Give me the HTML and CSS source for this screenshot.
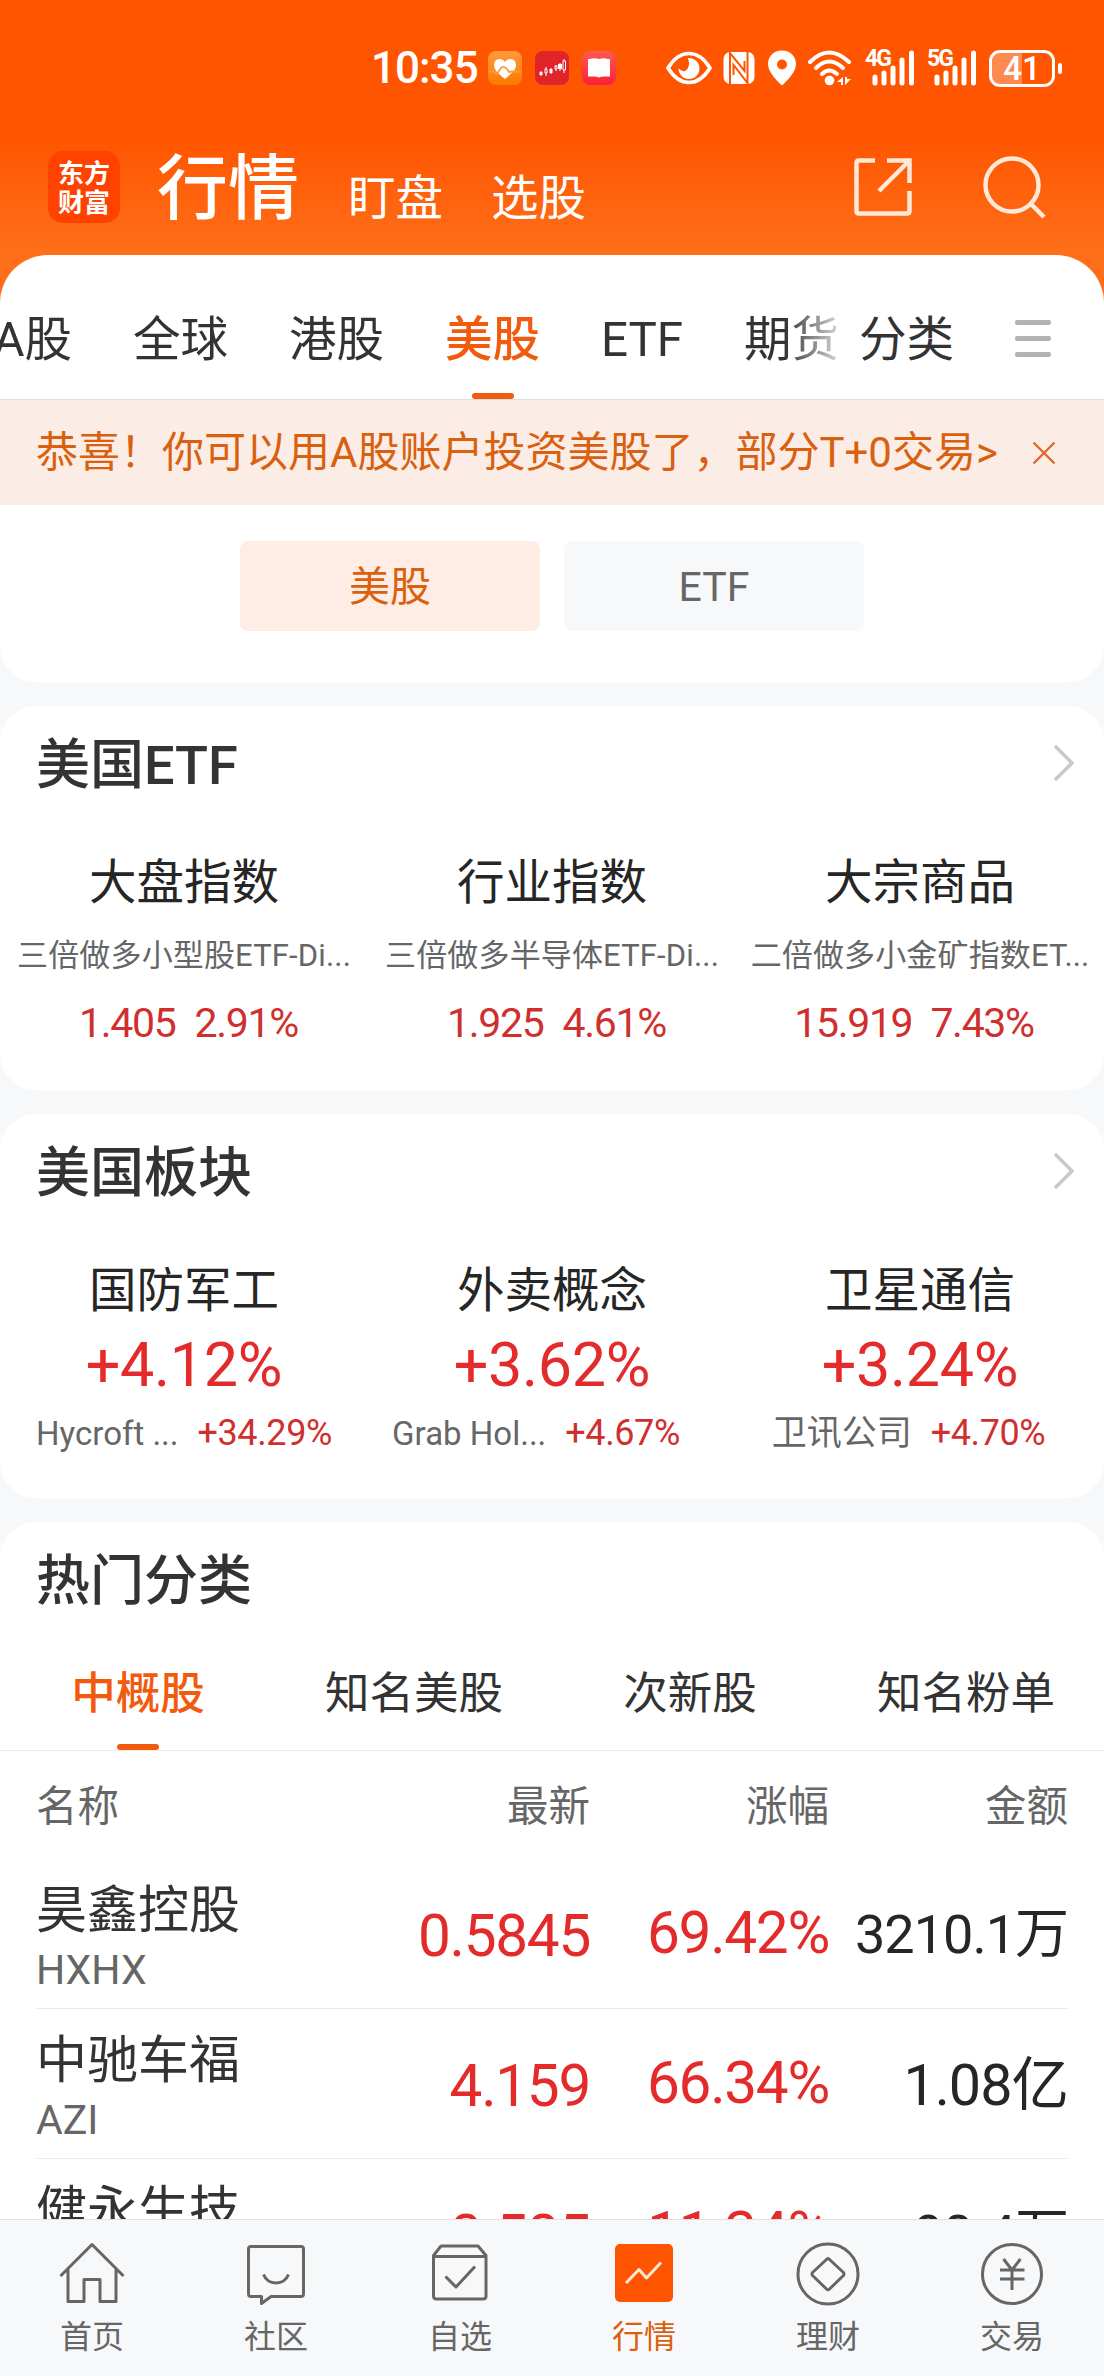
FILE: index.html
```html
<!DOCTYPE html>
<html lang="zh-CN">
<head>
    <meta charset="UTF-8">
    <meta name="viewport" content="width=device-width, initial-scale=1.0">
    <title>行情</title>

    <link rel="stylesheet" href="styles.css">
</head>
<body>
    <div class="app">
        <div class="header">
            <div class="status-bar">
                <span class="clock">10:35</span>
                <svg class="app-icon" viewBox="0 0 34 34">
                    <defs>
                        <linearGradient id="health" x1="0" y1="0" x2="0" y2="1"><stop offset="0" stop-color="#ff9a3c"/><stop offset="1" stop-color="#fb7a00"/></linearGradient>
                        <linearGradient id="book" x1="0" y1="0" x2="0" y2="1"><stop offset="0" stop-color="#ff5a50"/><stop offset="1" stop-color="#fb2038"/></linearGradient>
                    </defs>
                    <rect width="34" height="34" rx="8" fill="url(#health)"/>
                    <path d="M17 28 C10 22 6 19 6 14 C6 7 14 6 17 11 C20 6 28 7 28 14 C28 19 24 22 17 28Z" fill="#fff"/>
                    <path d="M0 20.500 H6 L9 23.500 Q13 15 16 16 T21 21 L24 20.500 H34" fill="none" stroke="#ff9a3c" stroke-width="1.800"/>
                </svg>
                <svg class="app-icon" viewBox="0 0 34 34">
                    <rect width="34" height="34" rx="8" fill="#e0242a"/>
                    <path d="M6 20v5M11 16v9M16 17v6M21 14v6M25 12v8M29 8v14" stroke="#fff" stroke-width="1"/>
                    <path d="M4.500 21h3v3h-3zM14.500 18h3v4h-3zM23 13h4v5h-4z" fill="#fff"/>
                    <path d="M10 18h2v4h-2zM20 15h2v3h-2zM28 10h2.500v9H28z" fill="#e0242a" stroke="#fff"/>
                </svg>
                <svg class="app-icon" viewBox="0 0 34 34">
                    <rect width="34" height="34" rx="8" fill="url(#book)"/>
                    <path d="M6 8H8Q12 6.500 17 8Q22 6.500 26 8H28V25.500H24Q20 25 17 26.500Q14 25 10 25.500H6Z" fill="#fff"/>
                </svg>
                <div class="status-right">
                    <svg width="46" height="34" viewBox="0 0 46 34">
                        <path d="M2 17 Q11 2.500 23 2.500 T44 17 Q35 31.500 23 31.500 T2 17Z" fill="none" stroke="#fff" stroke-width="3.600"/>
                        <path d="M22 7 A10.500 10.500 0 1 1 12.500 17 Q15 21 19 20 Q25 17 22 7Z" fill="#fff"/>
                    </svg>
                    <svg class="nfc" width="32" height="34" viewBox="0 0 32 34">
                        <rect x="0.500" y="1" width="31" height="32" rx="7" fill="#fff"/>
                        <path d="M7 33V2L21.500 20V10M24.500 1V32L10.500 14V24" fill="none" stroke="#ff5500" stroke-width="2"/>
                    </svg>
                    <svg class="pin" width="30" height="36" viewBox="0 0 30 36">
                        <path d="M15 0.500 C6.500 .500 1 6.500 1 14 C1 21 8 29 15 35.500 C22 29 29 21 29 14 C29 6.500 23.500 .500 15 .500Z M15 9.500a5 5 0 1 1 0 10a5 5 0 1 1 0-10Z" fill="#fff" fill-rule="evenodd"/>
                    </svg>
                    <svg class="wifi" width="46" height="36" viewBox="0 0 46 36">
                        <g fill="none" stroke="#fff" stroke-width="4" stroke-linecap="round">
                            <path d="M3 12 Q22 -7 42 12"/>
                            <path d="M9 18 Q22 5 36 18"/>
                            <path d="M15 24 Q22 17 30 24"/>
                        </g>
                        <circle cx="22.500" cy="30.500" r="4.800" fill="#fff"/>
                        <path d="M30 32l6-5v8h-2v-3zM38 27v8l6-6h-4v-2z" fill="#fff"/>
                    </svg>
                    <div class="signal">
                        <span>4G</span>
                        <svg width="50" height="36" viewBox="0 0 50 36"><path d="M10 27v6M19 23v10M28 18v15M37 10v23M46.500 3v30" stroke="#fff" stroke-width="5" stroke-linecap="round"/></svg>
                    </div>
                    <div class="signal">
                        <span>5G</span>
                        <svg width="50" height="36" viewBox="0 0 50 36"><path d="M10 27v6M19 23v10M28 18v15M37 10v23M46.500 3v30" stroke="#fff" stroke-width="5" stroke-linecap="round"/></svg>
                    </div>
                    <div class="battery">41</div>
                </div>
            </div>

            <div class="top-nav">
                <div class="logo">东方<br>财富</div>
                <span class="nav-main">行情</span>
                <span class="nav-sub">盯盘</span>
                <span class="nav-sub">选股</span>
                <div class="top-icons">
                    <svg width="60" height="60" viewBox="0 0 60 60" fill="none" stroke="#ffe8d6" stroke-width="4.500">
                        <path d="M22 3.500H6Q3.500 3.500 3.500 6V54Q3.500 56.500 6 56.500H54Q56.500 56.500 56.500 54V34"/>
                        <path d="M34 3.500H56.500V26M56 4L26 34"/>
                    </svg>
                    <svg class="search" width="66" height="66" viewBox="0 0 66 66" fill="none" stroke="#ffe8d6" stroke-width="4.500">
                        <circle cx="31" cy="31" r="26.500"/>
                        <path d="M50 50L63 63"/>
                    </svg>
                </div>
            </div>
        </div>

        <div class="sheet">
            <div class="market-tabs">
                <div class="tab-list">
                    <span>A股</span>
                    <span>全球</span>
                    <span>港股</span>
                    <span class="active">美股</span>
                    <span class="etf">ETF</span>
                    <span>期货</span>
                </div>
                <span class="category">分类</span>
                <div class="menu"><i></i><i></i><i></i></div>
            </div>
            <div class="notice">
                <span>恭喜！你可以用A股账户投资美股了，部分T+0交易&gt;</span>
                <svg width="24" height="24" viewBox="0 0 24 24"><path d="M1.500 1.500L22.500 22.500M22.500 1.500L1.500 22.500" stroke="#dd6a2c" stroke-width="2.400"/></svg>
            </div>
            <div class="switch">
                <span class="selected">美股</span>
                <span>ETF</span>
            </div>
        </div>

        <div class="card">
            <div class="card-title">
                <h2>美国ETF</h2>
                <svg width="24" height="38" viewBox="0 0 24 38"><path d="M3 2L20 19L3 36" fill="none" stroke="#c9c9c9" stroke-width="3.500"/></svg>
            </div>
            <div class="three-cols">
                <div class="col">
                    <div class="name">大盘指数</div>
                    <div class="fund">三倍做多小型股ETF-Di...</div>
                    <div class="quote"><span>1.405</span><span>2.91%</span></div>
                </div>
                <div class="col">
                    <div class="name">行业指数</div>
                    <div class="fund">三倍做多半导体ETF-Di...</div>
                    <div class="quote"><span>1.925</span><span>4.61%</span></div>
                </div>
                <div class="col">
                    <div class="name">大宗商品</div>
                    <div class="fund">二倍做多小金矿指数ET...</div>
                    <div class="quote wide"><span>15.919</span><span>7.43%</span></div>
                </div>
            </div>
        </div>

        <div class="card">
            <div class="card-title">
                <h2>美国板块</h2>
                <svg width="24" height="38" viewBox="0 0 24 38"><path d="M3 2L20 19L3 36" fill="none" stroke="#c9c9c9" stroke-width="3.500"/></svg>
            </div>
            <div class="three-cols">
                <div class="col">
                    <div class="name">国防军工</div>
                    <div class="change">+4.12%</div>
                    <div class="leader first"><span class="stock">Hycroft ...</span><span>+34.29%</span></div>
                </div>
                <div class="col">
                    <div class="name">外卖概念</div>
                    <div class="change">+3.62%</div>
                    <div class="leader second"><span class="stock">Grab Hol...</span><span>+4.67%</span></div>
                </div>
                <div class="col">
                    <div class="name">卫星通信</div>
                    <div class="change">+3.24%</div>
                    <div class="leader third"><span class="stock cn">卫讯公司</span><span>+4.70%</span></div>
                </div>
            </div>
        </div>

        <div class="card hot">
            <div class="card-title">
                <h2>热门分类</h2>
            </div>
            <div class="hot-tabs">
                <span class="active">中概股</span>
                <span>知名美股</span>
                <span>次新股</span>
                <span>知名粉单</span>
            </div>
            <div class="row row-head">
                <span>名称</span>
                <span>最新</span>
                <span>涨幅</span>
                <span>金额</span>
            </div>
            <div class="row">
                <div class="company">昊鑫控股<small>HXHX</small></div>
                <span class="price">0.5845</span>
                <span class="rate">69.42%</span>
                <span class="amount long">3210.1万</span>
            </div>
            <div class="row">
                <div class="company">中驰车福<small>AZI</small></div>
                <span class="price">4.159</span>
                <span class="rate">66.34%</span>
                <span class="amount">1.08亿</span>
            </div>
            <div class="row">
                <div class="company">健永生技</div>
                <span class="price">0.585</span>
                <span class="rate">11.34%</span>
                <span class="amount long">90.4万</span>
            </div>
        </div>

        <div class="tab-bar">
            <div class="tab-item">
                <svg width="66" height="66" viewBox="0 0 66 66">
                    <path d="M1.500 35L33 3.500L64.500 35M9 28V60.500H25V38.500H41V60.500H57V28"/>
                </svg>
                <span>首页</span>
            </div>
            <div class="tab-item">
                <svg width="66" height="66" viewBox="0 0 66 66">
                    <path d="M8 5.500H58Q60.500 5.500 60.500 8V53Q60.500 55.500 58 55.500H28L18.500 62.500V55.500H8Q5.500 55.500 5.500 53V8Q5.500 5.500 8 5.500Z"/>
                    <path d="M20.500 33.500Q24 42 33 42T45.500 33.500"/>
                </svg>
                <span>社区</span>
            </div>
            <div class="tab-item">
                <svg width="66" height="66" viewBox="0 0 66 66">
                    <path d="M6.500 14.500L14 5H51L59 14.500V55Q59 58 56 58H9.500Q6.500 58 6.500 55ZM6.500 15.500H59M18.500 35.500L29 46L48 25.500"/>
                </svg>
                <span>自选</span>
            </div>
            <div class="tab-item current">
                <svg width="66" height="66" viewBox="0 0 66 66">
                    <rect x="4" y="3" width="58" height="58" rx="5"/>
                    <path d="M15 42L28 28.500L35.500 37L50 21.500"/>
                </svg>
                <span>行情</span>
            </div>
            <div class="tab-item">
                <svg width="66" height="66" viewBox="0 0 66 66">
                    <circle cx="33" cy="33" r="30"/>
                    <path d="M31.500 18.500Q33 16.500 34.500 18.500L48.500 31.500Q49.500 33 48.500 34.500L34.500 48Q33 49.500 31.500 48L17.500 34.500Q16.500 33 17.500 31.500Z"/>
                </svg>
                <span>理财</span>
            </div>
            <div class="tab-item">
                <svg width="66" height="66" viewBox="0 0 66 66">
                    <circle cx="33" cy="33" r="29.500"/>
                    <path d="M24.500 18L33 29L41.500 18M33 29V49M21 29H45.500M21 38H45.500"/>
                </svg>
                <span>交易</span>
            </div>
        </div>
    </div>
</body>
</html>
```

FILE: styles.css
```css
*{
    box-sizing: border-box;
}

body{
    margin: 0;
    background-color: #f7f8fa;
    color: #333;
    font-family: Roboto, "Noto Sans CJK SC", sans-serif;
}

svg{
    display: block;
    flex: none;
}

.app{
    width: 1104px;
    height: 2376px;
    display: flex;
    flex-direction: column;
    overflow: hidden;
    background: linear-gradient(#ff5500 135px, #ff6f1a 255px, #ff6f1a 310px, #f7f8fa 310px);
}

.header{
    flex: none;
    height: 255px;
    color: white;
}

/* status bar */
.status-bar{
    height: 136px;
    padding: 0 42px 0 371px;
    display: flex;
    align-items: center;
}

.clock{
    width: 117px;
    font-size: 44px;
    line-height: 50px;
    letter-spacing: -1px;
    font-weight: 500;
}

.app-icon{
    width: 34px;
    height: 34px;
    margin-right: 13px;
}

.status-right{
    flex: 1;
    display: flex;
    align-items: center;
    justify-content: flex-end;
}

.nfc{
    margin-left: 11px;
}

.pin{
    margin-left: 12px;
}

.wifi{
    margin-left: 10px;
}

.signal{
    position: relative;
    margin-left: 12px;
}

.signal span{
    position: absolute;
    left: 0;
    top: -3px;
    font-size: 23px;
    line-height: 24px;
    letter-spacing: -2px;
    font-weight: 700;
}

.battery{
    position: relative;
    width: 66px;
    height: 37px;
    margin-left: 12px;
    margin-right: 7px;
    border: 3px solid #fff;
    border-radius: 11px;
    background: linear-gradient(90deg, #ff8a50 50%, transparent 50%);
    font-size: 33px;
    font-weight: 500;
    line-height: 32px;
    text-align: center;
}

.battery::after{
    content: "";
    position: absolute;
    right: -10px;
    top: 10px;
    width: 4px;
    height: 11px;
    border-radius: 2px;
    background-color: #fff;
}

/* top navigation */
.top-nav{
    height: 119px;
    padding: 0 57px 17px 48px;
    display: flex;
    align-items: center;
}

.logo{
    width: 72px;
    height: 72px;
    border-radius: 15px;
    background-color: #ff4200;
    font-family: "Noto Sans CJK SC", sans-serif;
    font-size: 26px;
    font-weight: 700;
    line-height: 29px;
    padding-top: 6px;
    text-align: center;
}

.nav-main{
    margin: 3px 0 0 37px;
    font-size: 71px;
    line-height: 80px;
    font-weight: 500;
}

.nav-sub{
    margin: 24px 0 0 49px;
    font-size: 47.500px;
    line-height: 60px;
}

.nav-sub + .nav-sub{
    margin-left: 48px;
}

.top-icons{
    flex: 1;
    display: flex;
    align-items: center;
    justify-content: flex-end;
}

.search{
    margin-left: 68px;
}

/* white sheet with market tabs */
.sheet{
    flex: none;
    height: 427px;
    background-color: white;
    border-radius: 48px 48px 36px 36px;
}

.market-tabs{
    height: 145px;
    padding: 22px 53px 0 0;
    border-bottom: 1px solid #ddd;
    display: flex;
    align-items: center;
    font-size: 47.500px;
    line-height: 126px;
}

.tab-list{
    width: 839px;
    height: 122px;
    display: flex;
    gap: 61px;
    justify-content: flex-end;
    white-space: nowrap;
    overflow: hidden;
    -webkit-mask-image: linear-gradient(90deg, #000 785px, rgba(0,0,0,0.2) 838px);
    mask-image: linear-gradient(90deg, #000 785px, rgba(0,0,0,0.2) 838px);
}

.tab-list span{
    height: 122px;
}

.etf{
    width: 82px;
}

.active{
    position: relative;
    color: #f25a0e;
    font-weight: 500;
}

.active::after{
    content: "";
    position: absolute;
    left: 50%;
    bottom: 0;
    width: 42px;
    height: 6px;
    margin-left: -21px;
    border-radius: 3px;
    background-color: #f25a0e;
}

.category{
    height: 122px;
    margin-left: 20px;
}

.menu{
    width: 36px;
    margin-left: auto;
    display: flex;
    flex-direction: column;
    gap: 11px;
}

.menu i{
    height: 5px;
    border-radius: 2px;
    background-color: #b3b3b3;
}

.notice{
    height: 105px;
    padding: 0 48px 0 36px;
    display: flex;
    align-items: center;
    justify-content: space-between;
    background-color: #fbede5;
    color: #d9600f;
    font-size: 42px;
    line-height: 60px;
    white-space: nowrap;
}

.switch{
    padding-top: 36px;
    display: flex;
    justify-content: center;
    gap: 24px;
}

.switch span{
    width: 300px;
    height: 90px;
    border-radius: 8px;
    background-color: #f7f8fa;
    color: #666;
    font-size: 41px;
    line-height: 92px;
    text-align: center;
}

.switch .selected{
    background-color: #ffede5;
    color: #d9600f;
}

/* cards */
.card{
    flex: none;
    height: 384px;
    margin-top: 24px;
    border-radius: 36px;
    background-color: white;
}

.card-title{
    height: 114px;
    padding: 0 28px 0 36px;
    display: flex;
    align-items: center;
    justify-content: space-between;
}

.card-title h2{
    margin: 5px 0 0;
    font-size: 54px;
    line-height: 80px;
    font-weight: 500;
}

.three-cols{
    display: flex;
    margin-top: 29px;
}

.col{
    width: 368px;
    text-align: center;
    white-space: nowrap;
}

.name{
    font-size: 47.500px;
    line-height: 68px;
    color: #262626;
}

.fund{
    height: 72px;
    font-size: 31px;
    line-height: 78px;
    letter-spacing: 0.150px;
    color: #666;
}

.quote{
    display: flex;
    justify-content: center;
    gap: 19px;
    padding-left: 9px;
    font-size: 41px;
    line-height: 68px;
    letter-spacing: -1.300px;
    color: #d02f2f;
}

.quote.wide{
    gap: 18px;
    padding: 0 12px 0 0;
}

.change{
    font-size: 61px;
    line-height: 80px;
    letter-spacing: -0.300px;
    color: #e32b2b;
}

.leader{
    display: flex;
    align-items: center;
    justify-content: center;
    gap: 19px;
    font-size: 36px;
    line-height: 57px;
    letter-spacing: -0.400px;
    color: #d02f2f;
}

.leader.second{
    padding-right: 32px;
}

.leader.third{
    padding-right: 23px;
}

.stock{
    font-size: 33px;
    letter-spacing: 0;
    color: #666;
}

.stock.cn{
    font-size: 35px;
}

/* hot list */
.hot{
    flex: 1;
    min-height: 0;
    border-radius: 36px 36px 0 0;
    overflow: hidden;
}

.hot-tabs{
    height: 115px;
    display: flex;
    border-bottom: 1px solid #ebebeb;
}

.hot-tabs span{
    width: 276px;
    font-size: 44.500px;
    line-height: 116px;
    text-align: center;
}

.hot-tabs .active{
    height: 114px;
}

.row{
    height: 150px;
    margin: 0 36px;
    border-bottom: 1px solid #ebebeb;
    display: grid;
    grid-template-columns: 314px 240px 239px 239px;
    text-align: right;
    white-space: nowrap;
}

.row-head{
    height: 108px;
    border: none;
    color: #666;
    font-size: 41.500px;
    line-height: 111px;
}

.row-head span:first-child{
    text-align: left;
}

.company{
    padding-top: 21px;
    font-size: 51px;
    line-height: 62px;
    text-align: left;
}

.company small{
    display: block;
    font-size: 41px;
    line-height: 56px;
    color: #666;
}

.price, .rate{
    font-size: 58.500px;
    line-height: 154px;
    letter-spacing: -1.300px;
    color: #e32b2b;
}

.rate{
    line-height: 148px;
}

.amount{
    font-size: 57.500px;
    line-height: 154px;
    letter-spacing: -1px;
    color: #262626;
}

.amount.long{
    font-size: 54px;
    line-height: 152px;
}

/* bottom bar */
.tab-bar{
    flex: none;
    height: 157px;
    padding-top: 21px;
    border-top: 1px solid #e2e2e2;
    display: flex;
    background-color: #f7f8fa;
}

.tab-item{
    width: 184px;
    display: flex;
    flex-direction: column;
    align-items: center;
    font-size: 32px;
    line-height: 60px;
    color: #666;
}

.tab-item svg{
    fill: none;
    stroke: #666;
    stroke-width: 3;
    stroke-linejoin: round;
}

.tab-item.current{
    color: #d9600f;
}

.current svg rect{
    fill: #ff5500;
    stroke: none;
}

.current svg path{
    stroke: #ffe8d6;
}
```
